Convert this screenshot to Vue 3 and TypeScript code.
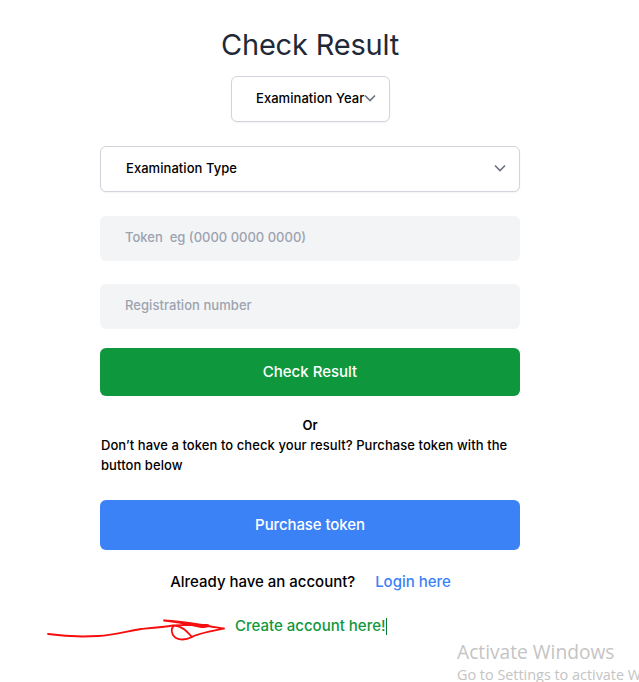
<script setup lang="ts">
const chevron = 'M1 1.5 L6 6.5 L11 1.5'
</script>

<template>
  <main class="page">
    <h1 class="title">Check Result</h1>

    <div class="select select-year">
      <span>Examination Year</span>
      <svg class="chevron" width="12" height="8" viewBox="0 0 12 8"><path :d="chevron" /></svg>
    </div>

    <form class="form" @submit.prevent>
      <div class="select select-type">
        <span>Examination Type</span>
        <svg class="chevron" width="12" height="8" viewBox="0 0 12 8"><path :d="chevron" /></svg>
      </div>

      <input class="field field-token" placeholder="Token  eg (0000 0000 0000)" />
      <input class="field field-reg" placeholder="Registration number" />

      <button class="btn btn-green" type="button">Check Result</button>

      <p class="or">Or</p>
      <p class="hint">Don’t have a token to check your result? Purchase token with the button below</p>

      <button class="btn btn-blue" type="button">Purchase token</button>

      <p class="login">
        <span>Already have an account?</span>
        <a class="login-link">Login here</a>
      </p>
      <p class="create"><a>Create account here!</a><i class="caret"></i></p>
    </form>

    <svg class="scribble" width="639" height="682" viewBox="0 0 639 682" aria-hidden="true">
      <path d="M48 634 C62 636 82 637 98 636 C114 635 128 631 141 629 C152 628 164 627 173 625.5 C186 624.5 200 625 207 625 C212 625.5 206 628 199 626.5 C188 624 174 621.5 164 620.5 C176 621 190 623 202 625 C210 626.5 218 627.5 224 628.5 C212 631 196 634 192 637 C184 641 176 640 173 635 C171 631 171 627 175 625.5 C181 626 187 631 192 637" />
    </svg>

    <div class="watermark">
      <div class="wm-title">Activate Windows</div>
      <div class="wm-sub">Go to Settings to activate Windows.</div>
    </div>
  </main>
</template>

<style scoped>
.page {
  position: relative;
  width: 639px;
  height: 682px;
  overflow: hidden;
  background: #fff;
  display: flex;
  flex-direction: column;
  align-items: center;
  padding: 26px 19px 0 0;
  box-sizing: border-box;
  font-family: Inter, "Liberation Sans", sans-serif;
  color: #000;
}
.page > * { flex: none; }
.title {
  margin: 0 0 12px;
  width: 420px;
  text-align: center;
  font-size: 29px;
  line-height: 38px;
  font-weight: 400;
  letter-spacing: -0.2px;
  color: #1f2937;
}
.select {
  display: flex;
  align-items: center;
  box-sizing: border-box;
  height: 46px;
  padding-bottom: 2px;
  background: #fff;
  border: 1px solid #d1d5db;
  border-radius: 6px;
  box-shadow: 0 1px 2px rgba(0, 0, 0, 0.05);
  font-size: 13px;
  font-weight: 500;
  letter-spacing: 0.05px;
}
.select-year {
  width: 159px;
  padding-left: 24px;
  margin-left: 1px;
  margin-bottom: 24px;
  white-space: nowrap;
}
.select-year .chevron { flex: none; }
.select-type {
  width: 420px;
  justify-content: space-between;
  padding: 0 13px 2px 25px;
  margin-bottom: 24px;
}
.chevron path {
  fill: none;
  stroke: #6b7280;
  stroke-width: 1.6;
}
.form {
  width: 420px;
  display: flex;
  flex-direction: column;
}
.field {
  box-sizing: border-box;
  width: 100%;
  height: 45px;
  border: 0;
  outline: 0;
  border-radius: 6px;
  background: #f3f4f6;
  padding: 0 25px 3px;
  font-family: inherit;
  font-size: 13px;
  font-weight: 500;
  white-space: pre;
}
.field::placeholder { color: #9ca3af; opacity: 1; }
.field-token { margin-bottom: 23px; }
.field-reg { margin-bottom: 19px; letter-spacing: 0.05px; }
.btn {
  display: block;
  width: 100%;
  border: 0;
  border-radius: 6px;
  padding: 0 0 2px;
  color: #fff;
  font-family: inherit;
  font-size: 15px;
  font-weight: 500;
}
.btn-green { height: 48px; background: #0f973d; }
.btn-blue { height: 50px; background: #3b82f6; letter-spacing: -0.1px; }
.or {
  margin: 19px 0 0;
  text-align: center;
  font-size: 13px;
  line-height: 20px;
  font-weight: 600;
}
.hint {
  margin: 0 0 25px;
  padding-left: 1px;
  font-size: 13px;
  line-height: 20px;
  font-weight: 500;
  letter-spacing: 0.07px;
}
.login {
  margin: 22px 0 0;
  display: flex;
  justify-content: center;
  gap: 20px;
  padding-left: 1px;
  font-size: 15px;
  line-height: 20px;
  font-weight: 500;
  letter-spacing: -0.02px;
}
.login-link { color: #3b82f6; }
.create {
  margin: 24px 0 0;
  padding-left: 135px;
  display: flex;
  align-items: center;
  font-size: 15px;
  line-height: 20px;
  font-weight: 500;
  color: #0f973d;
}
.caret {
  display: block;
  width: 1px;
  height: 17px;
  background: #0f7a33;
}
.scribble {
  position: absolute;
  left: 0;
  top: 0;
  pointer-events: none;
}
.scribble path {
  fill: none;
  stroke: #f60d0d;
  stroke-width: 1.8;
  stroke-linecap: round;
  stroke-linejoin: round;
}
.watermark {
  position: absolute;
  left: 457px;
  top: 639px;
  width: 260px;
  font-family: "Open Sans", "Noto Sans", sans-serif;
  color: #c4c4c4;
  white-space: nowrap;
}
.wm-title { font-size: 19.2px; line-height: 25px; }
.wm-sub { font-size: 14.4px; line-height: 21px; }
</style>
